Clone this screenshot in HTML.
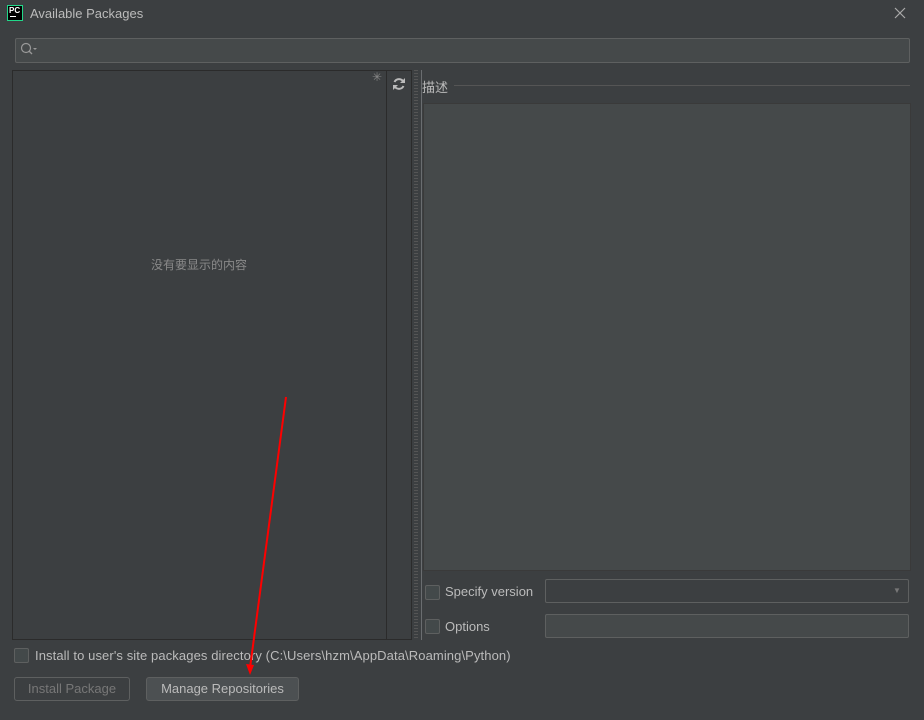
<!DOCTYPE html><html><head><style>
body{margin:0;width:924px;height:720px;background:#3c3f41;font-family:"Liberation Sans","Noto Sans CJK SC",sans-serif;color:#bbbbbb;position:relative;overflow:hidden;font-size:13px}
.a{position:absolute}
.cb{position:absolute;width:13px;height:13px;border:1px solid #5e6060;border-radius:2px;background:#43494a}
</style></head><body>
<div class="a" style="left:7px;top:5px;width:14px;height:14px;border:1px solid #21d789;background:#000"><div class="a" style="left:1px;top:0;color:#fff;font-size:8px;font-weight:bold">PC</div><div class="a" style="left:2px;top:10px;width:6px;height:1px;background:#fff"></div></div>
<div class="a" style="left:30px;top:6px;font-size:13px">Available Packages</div>
<svg class="a" style="left:894px;top:7px" width="12" height="12"><path d="M1 1L11 11M11 1L1 11" stroke="#aaa" stroke-width="1.2"/></svg>
<div class="a" style="left:15px;top:38px;width:893px;height:23px;border:1px solid #5e6060;border-radius:2px;background:#45494a"></div>
<svg class="a" style="left:20px;top:42px" width="18" height="14"><circle cx="6" cy="6" r="4.5" fill="none" stroke="#999" stroke-width="1.2"/><line x1="9" y1="9" x2="12" y2="12" stroke="#999" stroke-width="1.3"/><path d="M13 6h4l-2 2z" fill="#999"/></svg>
<div class="a" style="left:12px;top:70px;width:400px;height:570px;border:1px solid #2b2b2b;box-sizing:border-box"></div>
<div class="a" style="left:386px;top:71px;width:1px;height:568px;background:#2b2b2b"></div>
<div class="a" style="left:372px;top:70px;color:#888;font-size:12px">✳</div>
<svg class="a" style="left:392px;top:77px" width="14" height="14"><path d="M11.5 5A5 5 0 0 0 2.5 5M2.5 9A5 5 0 0 0 11.5 9" fill="none" stroke="#bbb" stroke-width="2"/><path d="M13 1v5h-5z M1 13v-5h5z" fill="#bbb"/></svg>
<div class="a" style="left:151px;top:256px;font-size:12px;color:#8a8a8a">没有要显示的内容</div>
<div class="a" style="left:414px;top:70px;width:4px;height:570px;background:repeating-linear-gradient(#555 0 1px,transparent 1px 3px)"></div>
<div class="a" style="left:421px;top:70px;width:1px;height:570px;background:#6a6d70"></div>
<div class="a" style="left:422px;top:77px;font-size:13px">描述</div>
<div class="a" style="left:454px;top:85px;width:456px;height:1px;background:#555"></div>
<div class="a" style="left:423px;top:103px;width:488px;height:468px;background:#45494a;border:1px solid #3a3a3a;box-sizing:border-box"></div>
<div class="cb" style="left:425px;top:585px"></div><div class="a" style="left:445px;top:584px">Specify version</div>
<div class="a" style="left:545px;top:579px;width:362px;height:22px;border:1px solid #5e6060;border-radius:2px;background:#3c3f41"></div>
<div class="a" style="left:893px;top:586px;color:#777;font-size:8px">▼</div>
<div class="cb" style="left:425px;top:619px"></div><div class="a" style="left:445px;top:619px">Options</div>
<div class="a" style="left:545px;top:614px;width:362px;height:22px;border:1px solid #5e6060;border-radius:2px;background:#45494a"></div>
<div class="cb" style="left:14px;top:648px"></div>
<div class="a" style="left:35px;top:648px;letter-spacing:0.1px">Install to user's site packages directory (C:\Users\hzm\AppData\Roaming\Python)</div>
<div class="a" style="left:14px;top:677px;width:114px;height:22px;border:1px solid #5e6060;border-radius:3px;color:#777;text-align:center;line-height:22px">Install Package</div>
<div class="a" style="left:146px;top:677px;width:151px;height:22px;border:1px solid #5e6060;border-radius:3px;background:#4c5052;color:#bbb;text-align:center;line-height:22px">Manage Repositories</div>
<svg class="a" style="left:0;top:0" width="924" height="720"><line x1="286" y1="397" x2="250" y2="668" stroke="#f00" stroke-width="2"/><path d="M246 664 L250 675 L254 665z" fill="#f00"/></svg>
</body></html>
